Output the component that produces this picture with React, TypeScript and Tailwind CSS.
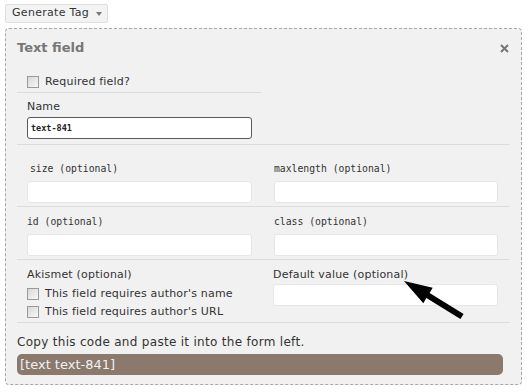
import { ReactNode } from "react";

const sans = { fontFamily: '"DejaVu Sans", Verdana, sans-serif' };
const mono = { fontFamily: '"DejaVu Sans Mono", Consolas, monospace' };

const Checkbox = ({ label }: { label: string }) => (
  <label className="flex items-center gap-[6px] h-[18px] text-[11px] tracking-[0.2px] text-[#333]">
    <span className="w-[12px] h-[12px] border border-[#9a9a9a] bg-gradient-to-br from-[#d8d8d8] to-[#f8f8f8]" />
    {label}
  </label>
);

const CodeField = ({ label, right, top }: { label: string; right?: boolean; top: string }) => (
  <div className={`border-b border-[#dcdcdc] ${top} ${right ? "pl-[12px] pr-[12px]" : "pl-[10px] pr-[10px]"}`}>
    <div className="h-[16px] leading-[16px] text-[9.75px] text-[#333]" style={mono}>
      {label} (optional)
    </div>
    <div className="mt-[4px] h-[22px] rounded-[3px] border border-[#e6e6e6] bg-white" />
  </div>
);

const Row = ({ children, h }: { children: ReactNode; h: string }) => (
  <div className={`grid grid-cols-[245px_248px] ${h}`}>{children}</div>
);

export default function App() {
  return (
    <div className="relative bg-white w-[529px] h-[392px] pl-[5px] pt-[4px]" style={sans}>
      <button className="flex items-center gap-[7px] h-[19px] pl-[6px] pr-[5px] rounded-[2px] border border-[#dedede] bg-[#f3f3f3] text-[11px] tracking-[0.3px] text-[#333]">
        Generate Tag
        <span className="w-0 h-0 border-l-[3.5px] border-r-[3.5px] border-t-[4px] border-l-transparent border-r-transparent border-t-[#777]" />
      </button>

      <div className="mt-[5px] w-[517px] h-[357px] rounded-[4px] border border-dashed border-[#a8a8a8] bg-[#f1f1f1] px-[11px]">
        <div className="flex h-[38px] items-center justify-between pr-[1px]">
          <h2 className="text-[13px] font-bold text-[#777]">Text field</h2>
          <svg width="9" height="9" viewBox="0 0 9 9">
            <path d="M1 1 L8 8 M8 1 L1 8" stroke="#777" strokeWidth="2" />
          </svg>
        </div>

        <Row h="h-[26px]">
          <div className="border-b border-[#dcdcdc] pl-[10px] pt-[6px]">
            <Checkbox label="Required field?" />
          </div>
          <div />
        </Row>

        <Row h="h-[52px]">
          <div className="border-b border-[#dcdcdc] pl-[10px] pr-[10px] pt-[6px]">
            <div className="h-[16px] leading-[16px] text-[11px] tracking-[0.2px] text-[#333]">Name</div>
            <div
              className="mt-[2px] flex h-[22px] items-center rounded-[3px] border border-[#5a5a5a] bg-white px-[3px] text-[8.5px] font-bold text-[#222]"
              style={mono}
            >
              text-841
            </div>
          </div>
          <div className="border-b border-[#dcdcdc]" />
        </Row>

        <Row h="h-[62px]">
          <CodeField label="size" top="pt-[16px] [&>div:first-child]:pl-[3px]" />
          <CodeField label="maxlength" right top="pt-[16px]" />
        </Row>

        <Row h="h-[53px]">
          <CodeField label="id" top="pt-[7px]" />
          <CodeField label="class" right top="pt-[7px]" />
        </Row>

        <Row h="h-[63px]">
          <div className="border-b border-[#dcdcdc] pl-[10px] pt-[7px]">
            <div className="h-[16px] leading-[16px] text-[11px] tracking-[0.2px] text-[#333]">Akismet (optional)</div>
            <div className="mt-[2px]">
              <Checkbox label="This field requires author's name" />
              <Checkbox label="This field requires author's URL" />
            </div>
          </div>
          <div className="border-b border-[#dcdcdc] pl-[11px] pr-[12px] pt-[7px]">
            <div className="h-[16px] leading-[16px] text-[11px] tracking-[0.2px] text-[#333]">Default value (optional)</div>
            <div className="mt-[1px] h-[22px] rounded-[3px] border border-[#e6e6e6] bg-white" />
          </div>
        </Row>

        <div className="mt-[11px] h-[16px] leading-[16px] text-[12px] tracking-[0.3px] text-[#333]">
          Copy this code and paste it into the form left.
        </div>
        <div className="mt-[4px] mr-[7px] flex h-[21px] items-center rounded-[5px] bg-[#8b796d] px-[3px] text-[13px] text-[#f2f2f2]">
          [text text-841]
        </div>
      </div>

      <svg className="absolute left-0 top-0 pointer-events-none" width="529" height="392">
        <polygon
          points="404,281 432.7,287.8 429.6,292.9 463.6,313.9 460.4,319.1 426.4,298.1 423.3,303.2"
          fill="#000"
        />
      </svg>
    </div>
  );
}
